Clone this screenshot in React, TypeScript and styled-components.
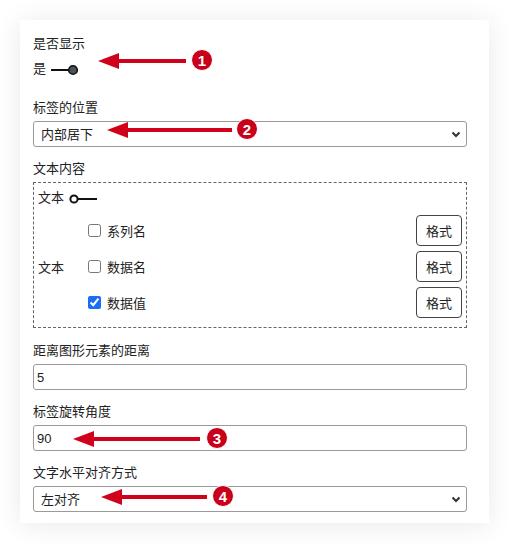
import React from "react";
import styled, { createGlobalStyle } from "styled-components";

const GlobalStyle = createGlobalStyle`
  body {
    margin: 0;
    background: #ffffff;
    font-family: "Liberation Sans", "Noto Sans CJK SC", sans-serif;
    font-size: 13px;
    color: #222;
  }
`;

const chevron =
  "url(\"data:image/svg+xml,%3Csvg xmlns='http://www.w3.org/2000/svg' width='10' height='7' viewBox='0 0 10 7'%3E%3Cpath d='M1.5 1.5 L5 5 L8.5 1.5' fill='none' stroke='%23333' stroke-width='2'/%3E%3C/svg%3E\")";

type Annotation = { n: number; tip: number; tail: number; y: number; badge: number };

// red call-outs drawn over the form
const annotations: Annotation[] = [
  { n: 1, tip: 98, tail: 186, y: 61, badge: 202 },
  { n: 2, tip: 107, tail: 232, y: 130, badge: 247 },
  { n: 3, tip: 73, tail: 200, y: 439, badge: 217 },
  { n: 4, tip: 101, tail: 207, y: 497, badge: 223 },
];

const Toggle = ({ on }: { on: boolean }) => (
  <ToggleSvg width="30" height="12" viewBox="0 0 30 12">
    {on ? (
      <>
        <line x1="0" y1="6" x2="19" y2="6" stroke="#111" strokeWidth="2" />
        <circle cx="22" cy="6" r="4.3" fill="#4a525a" stroke="#111" strokeWidth="1.6" />
      </>
    ) : (
      <>
        <circle cx="5" cy="6" r="3.6" fill="#fff" stroke="#111" strokeWidth="2" />
        <line x1="9" y1="6" x2="28" y2="6" stroke="#111" strokeWidth="2" />
      </>
    )}
  </ToggleSvg>
);

const checks = [
  { label: "系列名", checked: false },
  { label: "数据名", checked: false },
  { label: "数据值", checked: true },
];

export default function App() {
  return (
    <Page>
      <GlobalStyle />
      <Card>
        <Field $after={18}>
          <Label>是否显示</Label>
          <SwitchRow>
            <span>是</span>
            <Toggle on />
          </SwitchRow>
        </Field>

        <Field>
          <Label>标签的位置</Label>
          <Select defaultValue="bottom">
            <option value="bottom">内部居下</option>
          </Select>
        </Field>

        <Field $after={14}>
          <Label>文本内容</Label>
          <DashedBox>
            <SwitchRow $compact>
              <span>文本</span>
              <Toggle on={false} />
            </SwitchRow>
            <ContentBody>
              <SideLabel>文本</SideLabel>
              <CheckList>
                {checks.map((c) => (
                  <CheckRow key={c.label}>
                    <CheckLabel>
                      <Checkbox type="checkbox" defaultChecked={c.checked} />
                      {c.label}
                    </CheckLabel>
                    <FormatButton>格式</FormatButton>
                  </CheckRow>
                ))}
              </CheckList>
            </ContentBody>
          </DashedBox>
        </Field>

        <Field>
          <Label>距离图形元素的距离</Label>
          <Input defaultValue="5" />
        </Field>

        <Field>
          <Label>标签旋转角度</Label>
          <Input defaultValue="90" />
        </Field>

        <Field $after={0}>
          <Label>文字水平对齐方式</Label>
          <Select defaultValue="left">
            <option value="left">左对齐</option>
          </Select>
        </Field>
      </Card>

      <Overlay width="509" height="544" viewBox="0 0 509 544">
        {annotations.map((a) => (
          <g key={a.n}>
            <rect x={a.tip + 19} y={a.y - 2} width={a.tail - a.tip - 19} height="4" fill="#d0021b" />
            <polygon points={`${a.tip},${a.y} ${a.tip + 21},${a.y - 8} ${a.tip + 21},${a.y + 8}`} fill="#d0021b" />
            <circle cx={a.badge} cy={a.y - 1} r="10.5" fill="#c8001a" stroke="#fff" strokeWidth="1" />
            <BadgeText x={a.badge} y={a.y + 4.5}>{a.n}</BadgeText>
          </g>
        ))}
      </Overlay>
    </Page>
  );
}

const Page = styled.div`
  position: relative;
  width: 509px;
  height: 544px;
  padding: 20px 0 0 20px;
  box-sizing: border-box;
`;

const Card = styled.div`
  width: 469px;
  height: 503px;
  box-sizing: border-box;
  padding: 15px 22px 0 13px;
  background: #fff;
  box-shadow: 0 2px 26px rgba(0, 0, 0, 0.09);
  display: flex;
  flex-direction: column;
`;

const Field = styled.div<{ $after?: number }>`
  display: flex;
  flex-direction: column;
  gap: 4px;
  margin-bottom: ${(p) => (p.$after ?? 13)}px;
`;

const Label = styled.div`
  line-height: 18px;
  font-size: 13px;
  color: #222;
`;

const SwitchRow = styled.div<{ $compact?: boolean }>`
  display: flex;
  align-items: center;
  gap: 5px;
  height: ${(p) => (p.$compact ? "22px" : "24px")};
  line-height: 18px;
`;

const ToggleSvg = styled.svg`
  display: block;
  margin-top: 1px;
`;

const baseControl = `
  box-sizing: border-box;
  width: 100%;
  height: 26px;
  margin: 0;
  border: 1px solid #9a9a9a;
  border-radius: 3px;
  background-color: #fff;
  font-family: "Liberation Sans", "Noto Sans CJK SC", sans-serif;
  font-size: 13px;
  color: #222;
  outline: none;
`;

const Select = styled.select`
  ${baseControl}
  appearance: none;
  padding: 0 24px 0 7px;
  background-image: ${chevron};
  background-repeat: no-repeat;
  background-position: calc(100% - 5px) center;
`;

const Input = styled.input`
  ${baseControl}
  padding: 0 3px;
`;

const DashedBox = styled.div`
  border: 1px dashed #666;
  padding: 4px 4px 9px 4px;
  display: flex;
  flex-direction: column;
  gap: 6px;
`;

const ContentBody = styled.div`
  display: flex;
  align-items: center;
`;

const SideLabel = styled.div`
  width: 50px;
  flex: none;
`;

const CheckList = styled.div`
  flex: 1;
  display: flex;
  flex-direction: column;
  gap: 5px;
`;

const CheckRow = styled.div`
  display: flex;
  align-items: center;
  justify-content: space-between;
  height: 31px;
`;

const CheckLabel = styled.label`
  display: flex;
  align-items: center;
  gap: 6px;
`;

const Checkbox = styled.input`
  width: 13px;
  height: 13px;
  margin: 0;
  accent-color: #1a6ef5;
`;

const FormatButton = styled.button`
  width: 46px;
  height: 31px;
  border: 1px solid #444;
  border-radius: 4px;
  background: #fff;
  font-family: "Liberation Sans", "Noto Sans CJK SC", sans-serif;
  font-size: 13px;
  color: #222;
  padding: 0;
`;

const Overlay = styled.svg`
  position: absolute;
  left: 0;
  top: 0;
  pointer-events: none;
`;

const BadgeText = styled.text`
  fill: #fff;
  font-family: "Liberation Sans", sans-serif;
  font-weight: 700;
  font-size: 15px;
  text-anchor: middle;
`;
